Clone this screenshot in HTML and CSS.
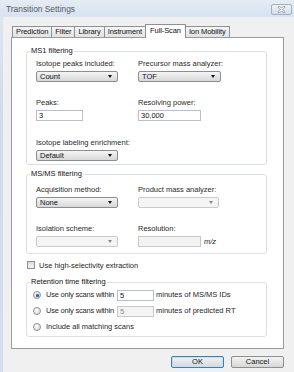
FILE: index.html
```html
<!DOCTYPE html>
<html>
<head>
<meta charset="utf-8">
<link rel="stylesheet" href="styles.css">
</head>
<body>
<div class="window">
  <div class="titlebar">
    <span class="title">Transition Settings</span>
    <span class="close"><svg width="9" height="7" viewBox="0 0 9 7"><path d="M2 1 L7 6 M7 1 L2 6" stroke="#7d8796" stroke-width="2.4" stroke-linecap="round"/><path d="M2 1 L7 6 M7 1 L2 6" stroke="#ffffff" stroke-width="1.1" stroke-linecap="round"/></svg></span>
  </div>
  <div class="client">
    <div class="tabs">
      <div class="tab">Prediction</div>
      <div class="tab">Filter</div>
      <div class="tab">Library</div>
      <div class="tab">Instrument</div>
      <div class="tab active">Full-Scan</div>
      <div class="tab">Ion Mobility</div>
    </div>
    <div class="panel">
      <fieldset class="group">
        <legend>MS1 filtering</legend>
        <div class="grid ms1">
          <div class="field">
            <div class="label">Isotope peaks included:</div>
            <div class="select w82">Count<span class="arrow"></span></div>
          </div>
          <div class="field">
            <div class="label">Precursor mass analyzer:</div>
            <div class="select w83">TOF<span class="arrow"></span></div>
          </div>
          <div class="field">
            <div class="label">Peaks:</div>
            <div class="input w47">3</div>
          </div>
          <div class="field">
            <div class="label">Resolving power:</div>
            <div class="input w63">30,000</div>
          </div>
          <div class="field row3">
            <div class="label">Isotope labeling enrichment:</div>
            <div class="select w82">Default<span class="arrow"></span></div>
          </div>
        </div>
      </fieldset>
      <fieldset class="group msms-group">
        <legend>MS/MS filtering</legend>
        <div class="grid msms">
          <div class="field">
            <div class="label">Acquisition method:</div>
            <div class="select w82">None<span class="arrow"></span></div>
          </div>
          <div class="field">
            <div class="label">Product mass analyzer:</div>
            <div class="select disabled w81"><span class="arrow"></span></div>
          </div>
          <div class="field">
            <div class="label">Isolation scheme:</div>
            <div class="select disabled w82"><span class="arrow"></span></div>
          </div>
          <div class="field">
            <div class="label">Resolution:</div>
            <div class="inline">
              <div class="input disabled w63"></div>
              <span class="unit">m/z</span>
            </div>
          </div>
        </div>
      </fieldset>
      <div class="check-row">
        <span class="checkbox"></span>
        <span class="check-text">Use high-selectivity extraction</span>
      </div>
      <fieldset class="group rt-group">
        <legend>Retention time filtering</legend>
        <div class="radios">
          <div class="radio-row">
            <span class="radio checked"></span>
            <span class="radio-text">Use only scans within</span>
            <div class="input w37">5</div>
            <span class="after">minutes of MS/MS IDs</span>
          </div>
          <div class="radio-row">
            <span class="radio"></span>
            <span class="radio-text">Use only scans within</span>
            <div class="input disabled-text w37">5</div>
            <span class="after">minutes of predicted RT</span>
          </div>
          <div class="radio-row">
            <span class="radio"></span>
            <span class="radio-text plain">Include all matching scans</span>
          </div>
        </div>
      </fieldset>
    </div>
    <div class="buttons">
      <div class="btn default">OK</div>
      <div class="btn">Cancel</div>
    </div>
  </div>
</div>
</body>
</html>
```
FILE: styles.css
```css
* { box-sizing: border-box; }
html, body { margin: 0; padding: 0; }
body {
  width: 294px;
  height: 372px;
  overflow: hidden;
  font-family: "Liberation Sans", Arial, sans-serif;
  font-size: 7.5px;
  color: #262626;
}
.window {
  width: 294px;
  height: 372px;
  display: flex;
  flex-direction: column;
  background: linear-gradient(#dfe8f3, #cfdcec 30%, #d3dfee);
}
.titlebar {
  height: 17px;
  display: flex;
  align-items: center;
  justify-content: space-between;
  padding: 0 2px 0 6px;
  background: linear-gradient(#e4ecf5, #d8e3f0);
}
.title {
  font-size: 8.4px;
  color: #555a62;
  margin-top: 1px;
}
.close {
  width: 21px;
  height: 11px;
  margin-top: 2px;
  border: 1px solid #a3afbf;
  border-radius: 2px;
  background: linear-gradient(#eef2f7, #d6dee9);
  display: flex;
  align-items: center;
  justify-content: center;
}
.client {
  flex: 1;
  margin-left: 3px;
  background: #f0f0f0;
  padding: 7px 10px 0 8px;
}
.tabs {
  display: flex;
  align-items: flex-end;
  height: 13px;
  padding-left: 1px;
}
.tab {
  height: 11px;
  border: 1px solid #8d9097;
  border-bottom: 0;
  margin-right: -1px;
  padding: 0 3px;
  line-height: 10px;
  color: #111;
  letter-spacing: -0.1px;
  background: linear-gradient(#f6f6f6, #e2e2e2);
}
.tab.active {
  height: 14px;
  margin-bottom: -1px;
  padding: 1px 4px 0;
  background: #fff;
  position: relative;
  z-index: 1;
}
.panel {
  height: 312px;
  border: 1px solid #9a9a9a;
  background: #fff;
  padding: 8px 16px 0 14px;
}
.group {
  margin: 0;
  padding: 0;
  min-width: 0;
  border: 1px solid #d9dfe4;
  border-radius: 3px;
}
.group legend {
  margin-left: 3px;
  padding: 0 1px;
  line-height: 10px;
  color: #111;
}
.grid {
  display: grid;
  grid-template-columns: 102px 1fr;
  padding-left: 9px;
}
.ms1 {
  row-gap: 16px;
  padding-top: 3px;
  padding-bottom: 3px;
}
.ms1 .row3 { margin-top: 1px; }
.msms-group { margin-top: 4px; }
.msms {
  row-gap: 16px;
  padding-top: 6px;
  padding-bottom: 6px;
}
.field {
  display: flex;
  flex-direction: column;
  align-items: flex-start;
  gap: 2px;
}
.label {
  line-height: 10px;
  color: #2a2a2a;
}
.select {
  height: 11px;
  position: relative;
  border: 1px solid #8b8d91;
  border-radius: 2px;
  background: linear-gradient(#f5f5f5, #e6e6e6 50%, #d8d8d8);
  line-height: 9px;
  padding-left: 3px;
  color: #111;
}
.select .arrow {
  position: absolute;
  right: 5px;
  top: 3px;
  width: 0;
  height: 0;
  border-left: 2.5px solid transparent;
  border-right: 2.5px solid transparent;
  border-top: 3px solid #111;
}
.select.disabled {
  border-color: #c9cacc;
  background: #f4f4f4;
}
.select.disabled .arrow { border-top-color: #8a8a8a; }
.input {
  height: 11px;
  border: 1px solid #b9c0c8;
  background: #fff;
  line-height: 9px;
  padding-left: 2px;
  color: #111;
}
.input.disabled {
  background: #f2f2f2;
  border-color: #c8c8c8;
}
.input.disabled-text {
  background: #f4f4f4;
  border-color: #c8c8c8;
  color: #8a8a8a;
}
.w82 { width: 82px; }
.w83 { width: 83px; }
.w81 { width: 81px; }
.w47 { width: 47px; }
.w63 { width: 63px; }
.w37 { width: 37px; }
.inline {
  display: flex;
  align-items: center;
  gap: 3px;
}
.unit {
  font-style: italic;
  line-height: 10px;
}
.check-row {
  display: flex;
  align-items: center;
  height: 10px;
  margin-top: 6px;
  padding-left: 1px;
}
.checkbox {
  width: 8px;
  height: 8px;
  border: 1px solid #8e8f8f;
  background: linear-gradient(#dcdcdc, #f4f4f4);
  margin-right: 4px;
}
.rt-group { margin-top: 7px; }
.radios {
  display: flex;
  flex-direction: column;
  gap: 4px;
  padding: 2px 0 3px 6px;
}
.radio-row {
  display: flex;
  align-items: center;
  height: 12px;
}
.radio {
  width: 8px;
  height: 8px;
  border-radius: 50%;
  border: 1px solid #8d8f92;
  background: radial-gradient(circle at 40% 35%, #fafafa, #d6d6d6);
  margin-right: 5px;
  position: relative;
}
.radio.checked::after {
  content: "";
  position: absolute;
  left: 1.5px;
  top: 1.5px;
  width: 3px;
  height: 3px;
  border-radius: 50%;
  background: #2a5da8;
  box-shadow: 0 0 1px #5b8fd6;
}
.radio-text {
  width: 71px;
  white-space: nowrap;
  line-height: 10px;
  letter-spacing: -0.2px;
}
.radio-text.plain { width: auto; letter-spacing: 0; }
.after {
  margin-left: 2px;
  line-height: 10px;
}
.buttons {
  display: flex;
  justify-content: flex-end;
  gap: 7px;
  margin-top: 7px;
}
.btn {
  width: 53px;
  height: 12px;
  border: 1px solid #8f8f8f;
  border-radius: 2px;
  background: linear-gradient(#f3f3f3, #e5e5e5 50%, #d7d7d7);
  text-align: center;
  line-height: 10px;
  color: #111;
}
.btn.default {
  border-color: #3c7fb1;
  box-shadow: inset 0 0 0 1px #bfe0f5;
}
```
